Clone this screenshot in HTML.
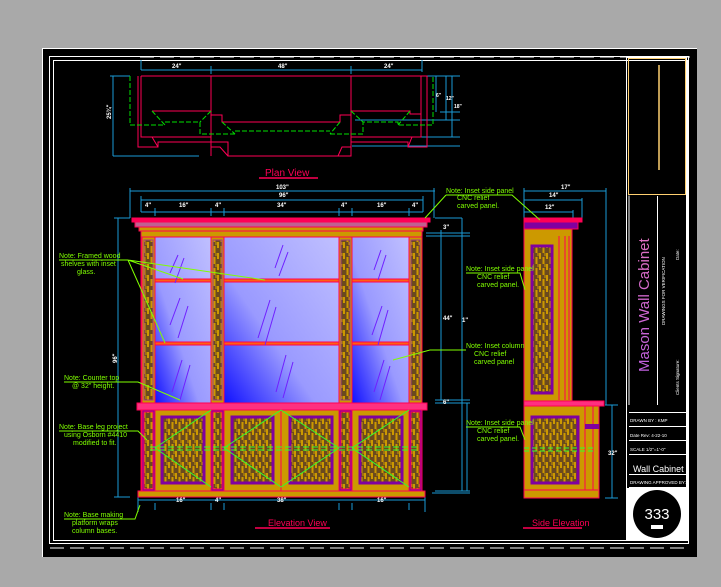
<!DOCTYPE html>
<html><head><meta charset="utf-8"><style>
html,body{margin:0;padding:0;background:#a9a9a9;width:721px;height:587px;overflow:hidden}
svg{display:block}
text{font-family:"Liberation Sans",sans-serif}
</style></head><body>
<svg width="721" height="587" viewBox="0 0 721 587" xmlns="http://www.w3.org/2000/svg">
<defs>
<linearGradient id="gl" x1="1" y1="0" x2="0" y2="1">
<stop offset="0" stop-color="#c0c0ff"/><stop offset="0.6" stop-color="#9a9aff"/><stop offset="1" stop-color="#1010ff"/></linearGradient>
<linearGradient id="gl2" x1="1" y1="0" x2="0" y2="1">
<stop offset="0" stop-color="#c0c0ff"/><stop offset="0.55" stop-color="#9a9aff"/><stop offset="1" stop-color="#1010ff"/></linearGradient>
<pattern id="wood" width="7" height="11" patternUnits="userSpaceOnUse">
<rect width="7" height="11" fill="#6b4a1e"/>
<rect x="0" y="0" width="2" height="6" fill="#cc9900"/><rect x="3.5" y="4" width="2" height="7" fill="#cc9900"/><rect x="5.5" y="0" width="1" height="3" fill="#cc9900"/>
</pattern>
<linearGradient id="tt" x1="0" y1="0" x2="1" y2="0"><stop offset="0" stop-color="#c060e0"/><stop offset="1" stop-color="#e070c0"/></linearGradient>
</defs>
<rect x="42" y="48" width="655" height="509" fill="#000"/>
<path d="M42.5 557V48.5H697" stroke="#fff" fill="none"/>
<rect x="49.5" y="56.5" width="639" height="487" fill="none" stroke="#fff"/>
<rect x="53.5" y="60.5" width="634" height="480" fill="none" stroke="#fff"/>
<path d="M50 548H690" stroke="#fff" stroke-dasharray="14 6"/>
<path d="M140 57H690" stroke="#fff" stroke-dasharray="14 6"/>

<g fill="none" stroke-width="1">
<g stroke="#1a9ad6">
<path d="M141 60V70M141 70H422M141 70V62M211 66V74M351 66V74M422 60V72M114 76H130M113 76V156M113 156H199M110 76H118M356 76H460M440 112H460M355 120H460M360 137H460M352 146H460M436 76V112M446 76V120M452 76V137M421 146H460"/>
</g>
<g stroke="#ff0055">
<path d="M141 76H427V147H408V142H351V156H228V142H158V147H138V76"/>
<path d="M141 76V137H211V142M211 76V156M351 76V156M421 76V137H351"/>
<path d="M141 137H152L158 147M421 137H412L408 147M211 147H220L228 156M351 147H342L338 156"/>
<path d="M152 111H211V115H222V122H340V115H351V111H410V114H421"/>
</g>
<g stroke="#00e000" stroke-dasharray="5 2">
<path d="M130 76V125H165M165 122H200V134H235M235 131H330M330 134H363V122H398V125H433V76"/>
<path d="M152 111L165 125M211 111L200 122M222 122L235 134M340 122L330 134M351 111L363 122M410 111L398 125"/>
</g>
</g>
<g fill="#fff" font-size="6" font-weight="bold"><text x="172" y="68">24"</text><text x="278" y="68">48"</text><text x="384" y="68">24"</text>
<text x="104" y="118" transform="rotate(-90 108 115)">25¾"</text><text x="436" y="97" font-size="5">6"</text><text x="446" y="100" font-size="5">12"</text><text x="454" y="108" font-size="5">18"</text></g>
<text x="265" y="176" fill="#ff0055" font-size="10">Plan  View</text>
<path d="M259 178H318" stroke="#ff0055" stroke-width="1.5"/>

<g stroke="#1a9ad6" fill="none">
<path d="M130 191H435M130 188V218M434 188V218M141 200H423M141 196V212M423 196V212M141 212H423M155 208V216M211 208V216M224 208V216M339 208V216M352 208V216M409 208V216"/>
<path d="M118 218V497M114 218H130M114 497H130M435 218H462M462 218V491M435 403H470M467 403V491M435 491H470M426 233H470M426 236H470M435 400H470M441 230V400M432 493H470"/>
<path d="M138 500H425M138 497V512M425 497V512M155 503V510M211 503V510M224 503V510M339 503V510M352 503V510M409 503V510"/>
</g>
<g fill="#fff" font-size="6" font-weight="bold"><text x="276" y="189">103"</text><text x="279" y="197">96"</text>
<text x="145" y="207">4"</text><text x="179" y="207">16"</text><text x="215" y="207">4"</text><text x="277" y="207">34"</text><text x="341" y="207">4"</text><text x="377" y="207">16"</text><text x="412" y="207">4"</text>
<text x="176" y="502">16"</text><text x="215" y="502">4"</text><text x="277" y="502">38"</text><text x="377" y="502">16"</text>
<text x="443" y="229">3"</text><text x="443" y="320">44"</text><text x="443" y="404">6"</text><text x="462" y="322">1"</text>
<text x="114" y="360" transform="rotate(-90 117 360)">96"</text></g>

<g stroke="#ff0055" stroke-width="1">
<rect x="132" y="218" width="298" height="4" fill="#ff0055"/>
<rect x="135" y="222" width="292" height="5" fill="#c06090"/>
<rect x="139" y="227" width="284" height="4" fill="#cc9900"/>
<rect x="141" y="231" width="281" height="6" fill="#cc9900"/>
<rect x="141" y="237" width="281" height="166" fill="#cc9900"/>
<rect x="155" y="237" width="56" height="166" fill="url(#gl)"/>
<rect x="224" y="237" width="115" height="166" fill="url(#gl)"/>
<rect x="352" y="237" width="57" height="166" fill="url(#gl2)"/>
<rect x="155" y="279" width="56" height="3" fill="#ff6010"/><rect x="155" y="342" width="56" height="3" fill="#ff6010"/>
<rect x="224" y="279" width="115" height="3" fill="#ff6010"/><rect x="224" y="342" width="115" height="3" fill="#ff6010"/>
<rect x="352" y="279" width="57" height="3" fill="#ff6010"/><rect x="352" y="342" width="57" height="3" fill="#ff6010"/>
<rect x="142" y="237" width="13" height="166" fill="#cc9900"/><rect x="144" y="240" width="9" height="160" fill="url(#wood)" stroke="#a04080"/>
<rect x="211" y="237" width="13" height="166" fill="#cc9900"/><rect x="213" y="240" width="9" height="160" fill="url(#wood)" stroke="#a04080"/>
<rect x="339" y="237" width="13" height="166" fill="#cc9900"/><rect x="341" y="240" width="9" height="160" fill="url(#wood)" stroke="#a04080"/>
<rect x="409" y="237" width="13" height="166" fill="#cc9900"/><rect x="411" y="240" width="9" height="160" fill="url(#wood)" stroke="#a04080"/>
<rect x="137" y="403" width="290" height="7" fill="#ff3080"/>
<rect x="141" y="410" width="281" height="81" fill="#cc9900"/>
<rect x="142" y="410" width="13" height="81" fill="#8000a0"/><rect x="144" y="412" width="9" height="77" fill="url(#wood)"/>
<rect x="211" y="410" width="13" height="81" fill="#8000a0"/><rect x="213" y="412" width="9" height="77" fill="url(#wood)"/>
<rect x="339" y="410" width="13" height="81" fill="#8000a0"/><rect x="341" y="412" width="9" height="77" fill="url(#wood)"/>
<rect x="409" y="410" width="13" height="81" fill="#8000a0"/><rect x="411" y="412" width="9" height="77" fill="url(#wood)"/>
<rect x="138" y="491" width="287" height="6" fill="#cc9900"/>
</g>
<g stroke="#8000a0" stroke-width="3" fill="url(#wood)">
<rect x="162" y="417" width="42" height="66"/><rect x="232" y="417" width="41" height="66"/><rect x="290" y="417" width="42" height="66"/><rect x="360" y="417" width="42" height="66"/>
</g>
<path d="M281 410V491" stroke="#ff0055"/>
<g stroke="#7020ff" stroke-width="1">
<path d="M170 273L178 255M175 283L184 258M275 268L283 245M279 276L288 252M374 270L381 250M378 280L386 255M170 325L180 298M178 338L188 306M258 338L270 300M265 345L276 307M372 335L382 306M378 345L388 310M172 392L182 360M180 400L190 365M276 392L286 355M283 398L293 362M374 392L384 360M380 400L390 366"/>
</g>
<g stroke="#30ff30" fill="none">
<path d="M155 448L211 410M155 448L211 487M224 448L281 410M224 448L281 487M339 448L281 410M339 448L281 487M352 448L409 410M352 448L409 487"/>
<path d="M150 447H420M150 450H420" stroke-dasharray="6 3"/>
</g>

<g stroke="#1a9ad6" fill="none">
<path d="M524 191H606M606 188V405M524 200H582M524 212H573M524 188V218M582 198V218M573 210V218M612 405V498M605 405H618M605 498H618"/>
</g>
<g fill="#fff" font-size="6" font-weight="bold"><text x="561" y="189">17"</text><text x="549" y="197">14"</text><text x="545" y="209">12"</text><text x="608" y="455">32"</text></g>
<g stroke="#ff0055">
<rect x="524" y="218" width="58" height="4" fill="#ff0055"/>
<rect x="524" y="222" width="54" height="7" fill="#8000a0"/>
<rect x="524" y="229" width="48" height="174" fill="#cc9900"/>
<path d="M559 236V400M565 236V400M569 236V400"/>
<rect x="524" y="401" width="80" height="5" fill="#ff3080"/>
<rect x="524" y="406" width="75" height="92" fill="#cc9900"/>
<path d="M585 406V490M593 406V490M524 490H598"/>
</g>
<rect x="532" y="246" width="20" height="147" fill="url(#wood)" stroke="#8000a0" stroke-width="3"/>
<rect x="532" y="417" width="46" height="66" fill="url(#wood)" stroke="#8000a0" stroke-width="3"/>
<rect x="585" y="424" width="14" height="5" fill="#8000a0"/>
<path d="M524 448H595M524 451H595" stroke="#30ff30" stroke-dasharray="5 3"/>

<g fill="#80ff00" font-size="7">
<text x="59" y="258">Note: Framed wood</text><text x="61" y="266">shelves with inset</text><text x="77" y="274">glass.</text>
<text x="64" y="380">Note: Counter top</text><text x="72" y="388">@ 32" height.</text>
<text x="59" y="429">Note: Base leg  project</text><text x="64" y="437">using Osborn  #4410</text><text x="73" y="445">modified to fit.</text>
<text x="64" y="517">Note: Base making</text><text x="72" y="525">platform wraps</text><text x="72" y="533">column bases.</text>
<text x="446" y="193">Note: Inset side panel</text><text x="457" y="200">CNC relief</text><text x="457" y="208">carved panel.</text>
<text x="466" y="271">Note: Inset side panel</text><text x="477" y="279">CNC relief</text><text x="477" y="287">carved panel.</text>
<text x="466" y="348">Note: Inset column</text><text x="474" y="356">CNC relief</text><text x="474" y="364">carved panel</text>
<text x="466" y="425">Note: Inset side panel</text><text x="477" y="433">CNC relief</text><text x="477" y="441">carved panel.</text>
</g>
<g stroke="#80ff00" fill="none">
<path d="M59 260H128L183 279M128 260L265 280M128 260L165 343M64 382H138L180 400M59 431H138L147 440M64 519H135L140 505M446 195H512L540 220M446 195L425 218M466 273H520L525 290M466 350H430L393 360M466 427H520L525 440"/>
</g>
<text x="268" y="526" fill="#ff0055" font-size="9">Elevation  View</text>
<path d="M255 528H330" stroke="#ff0055" stroke-width="1.5"/>
<text x="532" y="526" fill="#ff0055" font-size="9">Side  Elevation</text>
<path d="M523 528H582" stroke="#ff0055" stroke-width="1.5"/>

<g fill="none" stroke="#fff">
<rect x="626.5" y="57.5" width="60" height="483"/>
<path d="M629 195.5V405M657.5 196V405M629 412.5H686M629 426.5H686M629 440.5H686M629 454.5H686M629 474.5H686M629 487.5H686"/>
</g>
<rect x="628.5" y="58.5" width="57" height="136" fill="none" stroke="#ffd070"/>
<path d="M659 65V170" stroke="#ffd070" stroke-width="1.5"/>
<text x="0" y="0" transform="translate(649 372) rotate(-90)" fill="url(#tt)" font-family="Liberation Serif,serif" font-size="15">Mason Wall Cabinet</text>
<g fill="#fff" font-size="4.5">
<text transform="translate(665 325) rotate(-90)">DRAWINGS FOR VERIFICATION</text>
<text transform="translate(679 260) rotate(-90)">Date:</text>
<text transform="translate(679 395) rotate(-90)">Clients Signature:</text>
<text x="630" y="422">DRAWN BY :   KMP</text>
<text x="630" y="437">Date Rev: 4-22-10</text>
<text x="630" y="451">SCALE 1/2"=1'-0"</text>
<text x="630" y="484">DRAWING APPROVED BY:</text>
</g>
<text x="633" y="472" fill="#fff" font-size="9">Wall  Cabinet</text>
<rect x="627" y="488" width="59" height="52" fill="#fff"/>
<circle cx="657" cy="514" r="24" fill="#000"/>
<text x="657" y="519" fill="#fff" font-size="15" text-anchor="middle">333</text>
<rect x="651" y="525" width="12" height="4" fill="#fff"/>
</svg>
</body></html>
